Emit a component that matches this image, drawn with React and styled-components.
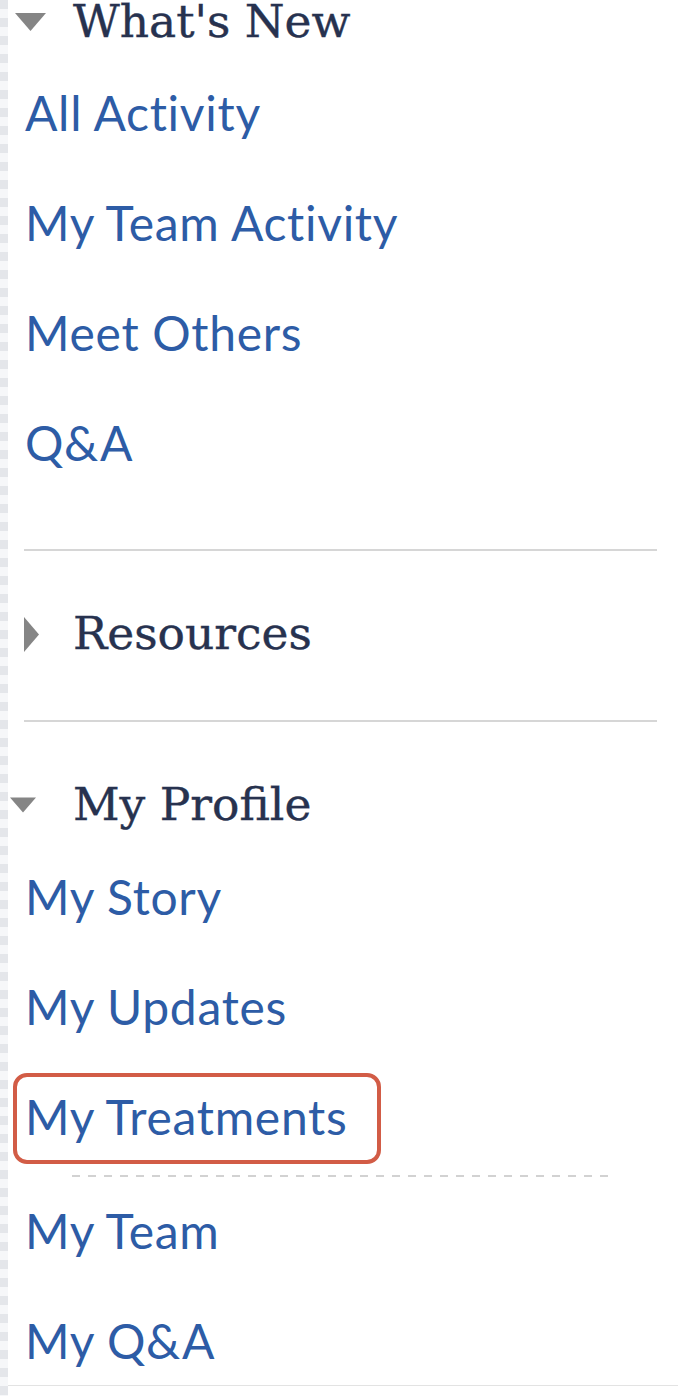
import React from "react";
import styled, { createGlobalStyle } from "styled-components";

const GlobalStyle = createGlobalStyle`
  html, body {
    margin: 0;
    padding: 0;
    background: #ffffff;
  }
`;

const Page = styled.div`
  width: 678px;
  height: 1396px;
  display: flex;
  overflow: hidden;
  background: #fff;
`;

const Rail = styled.div`
  width: 8px;
  flex-shrink: 0;
  background: repeating-linear-gradient(
    to bottom,
    #e4e6ea 0px,
    #e4e6ea 9px,
    #f6f7f9 9px,
    #f6f7f9 18px
  );
`;

const Nav = styled.nav`
  flex: 1;
  height: 1386px;
  border-bottom: 1px solid #e3e3e3;
  padding: 0 21px 0 16px;
  box-sizing: border-box;
  display: flex;
  flex-direction: column;
`;

const SectionHead = styled.div`
  display: flex;
  flex-shrink: 0;
  box-sizing: border-box;
  height: ${(p) => p.h}px;
  padding-top: ${(p) => p.pt || 0}px;
  align-items: flex-start;
  font-family: "DejaVu Serif", "Liberation Serif", serif;
  font-size: 45.5px;
  color: #27324f;
  -webkit-text-stroke: 0.4px #27324f;
`;

const HeadLine = styled.div`
  display: flex;
  align-items: center;
  height: 44px;
`;

const CaretBox = styled.span`
  width: 49px;
  display: flex;
  align-items: center;
  flex-shrink: 0;
`;

const Title = styled.span`
  line-height: 44px;
  white-space: nowrap;
`;

const Divider = styled.div`
  height: 2px;
  flex-shrink: 0;
  background: #d6d6d6;
  margin-top: ${(p) => p.mt || 0}px;
`;

const LinkItem = styled.a`
  position: relative;
  display: flex;
  align-items: center;
  flex-shrink: 0;
  box-sizing: border-box;
  height: 110px;
  padding: 0 0 6px 1px;
  font-family: Lato, "Open Sans", sans-serif;
  font-size: 48px;
  letter-spacing: 0.7px;
  white-space: nowrap;
  color: #2d5ca6;
  text-decoration: none;

  ${(p) =>
    p.highlighted &&
    `
    &::after {
      content: "";
      position: absolute;
      left: -11px;
      top: 9px;
      width: 368px;
      height: 91px;
      box-sizing: border-box;
      border: 4px solid #d25c46;
      border-radius: 14px;
    }
  `}
`;

const DashedRule = styled.div`
  height: 2px;
  flex-shrink: 0;
  margin: 1px 47px 1px 48px;
  background: repeating-linear-gradient(
    to right,
    #d2d2d2 0px,
    #d2d2d2 8px,
    transparent 8px,
    transparent 16px
  );
`;

const CaretDown = ({ w = 31, h = 18, dx = 0 }) => (
  <svg width={w} height={h} viewBox="0 0 31 18" style={{ marginLeft: dx }}>
    <polygon points="0,0 31,0 15.5,18" fill="#858585" />
  </svg>
);

const CaretRight = () => (
  <svg width="15" height="35" viewBox="0 0 15 35">
    <polygon points="0,0 15,17.5 0,35" fill="#858585" />
  </svg>
);

const whatsNew = ["All Activity", "My Team Activity", "Meet Others", "Q&A"];
const profile = ["My Story", "My Updates", "My Treatments"];

const App = () => {
  return (
    <Page>
      <GlobalStyle />
      <Rail />
      <Nav>
        <SectionHead h={60}>
          <HeadLine>
            <CaretBox>
              <CaretDown dx={-9} />
            </CaretBox>
            <Title>What's New</Title>
          </HeadLine>
        </SectionHead>
        {whatsNew.map((label) => (
          <LinkItem key={label} href="#">
            {label}
          </LinkItem>
        ))}
        <Divider mt={49} />
        <SectionHead h={169} pt={61}>
          <HeadLine>
            <CaretBox>
              <CaretRight />
            </CaretBox>
            <Title>Resources</Title>
          </HeadLine>
        </SectionHead>
        <Divider />
        <SectionHead h={122} pt={61}>
          <HeadLine>
            <CaretBox>
              <CaretDown w={26} h={18} dx={-14} />
            </CaretBox>
            <Title>My Profile</Title>
          </HeadLine>
        </SectionHead>
        {profile.map((label) => (
          <LinkItem
            key={label}
            href="#"
            highlighted={label === "My Treatments" ? 1 : 0}
          >
            {label}
          </LinkItem>
        ))}
        <DashedRule />
        <LinkItem href="#">My Team</LinkItem>
        <LinkItem href="#">My Q&amp;A</LinkItem>
      </Nav>
    </Page>
  );
};

export default App;
